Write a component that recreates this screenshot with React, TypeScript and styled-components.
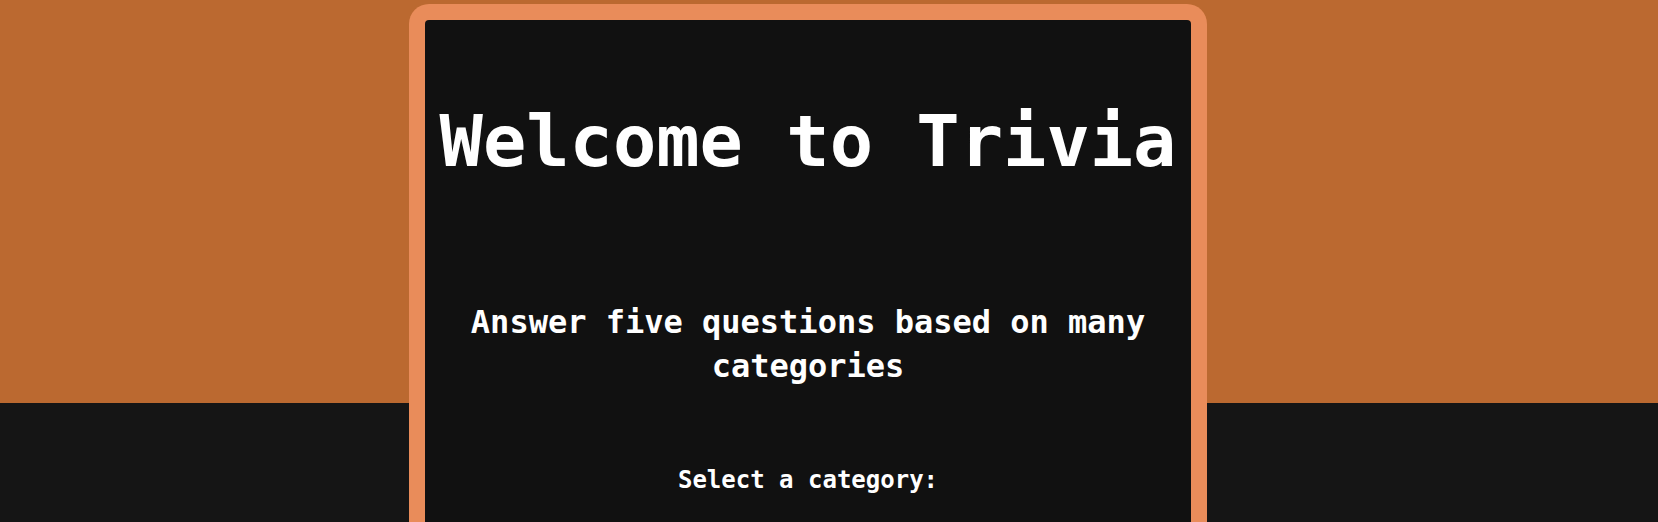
import React from "react";
import styled, { createGlobalStyle } from "styled-components";

const GlobalStyle = createGlobalStyle`
  html {
    scrollbar-width: none;
  }
  html::-webkit-scrollbar {
    display: none;
  }
  body {
    margin: 0;
    font-family: "DejaVu Sans Mono", "Liberation Mono", monospace;
    background: #151515;
  }
`;

const Page = styled.main`
  min-height: 100vh;
  display: flex;
  justify-content: center;
  align-items: flex-start;
  padding: 4px 42px 40px 0;
  box-sizing: border-box;
  background: linear-gradient(to bottom, #bb6930 0, #bb6930 403px, #151515 403px);
`;

const Card = styled.section`
  width: 798px;
  box-sizing: border-box;
  padding: 16px;
  background: #e98c5a;
  border-radius: 20px;
`;

const Panel = styled.div`
  background: #111111;
  border-radius: 4px;
  display: flex;
  flex-direction: column;
  align-items: center;
  padding: 78px 0 60px;
  color: #ffffff;
  text-align: center;
`;

const Title = styled.h1`
  margin: 0;
  font-size: 72px;
  line-height: 86.4px;
  font-weight: 700;
`;

const Subtitle = styled.h2`
  margin: 116px 0 0;
  padding: 0 40px;
  font-size: 32px;
  line-height: 44px;
  font-weight: 700;
`;

const Label = styled.label`
  margin-top: 79px;
  font-size: 24px;
  line-height: 26px;
  font-weight: 700;
`;

const Select = styled.select`
  margin-top: 40px;
  font-family: inherit;
  font-size: 20px;
  padding: 8px 16px;
  border-radius: 6px;
  border: 2px solid #e98c5a;
  background: #1c1c1c;
  color: #ffffff;
`;

const StartButton = styled.button`
  margin-top: 32px;
  font-family: inherit;
  font-size: 22px;
  font-weight: 700;
  padding: 12px 32px;
  border: none;
  border-radius: 8px;
  background: #e98c5a;
  color: #111111;
  cursor: pointer;
`;

const categories = [
  "General Knowledge",
  "Books",
  "Film",
  "Music",
  "Science & Nature",
  "History",
  "Geography",
  "Sports",
];

export default function App() {
  return (
    <>
      <GlobalStyle />
      <Page>
        <Card>
          <Panel>
            <Title>Welcome to Trivia</Title>
            <Subtitle>
              Answer five questions based on many
              <br />
              categories
            </Subtitle>
            <Label htmlFor="category">Select a category:</Label>
            <Select id="category" defaultValue={categories[0]}>
              {categories.map((c) => (
                <option key={c} value={c}>
                  {c}
                </option>
              ))}
            </Select>
            <StartButton type="button">Start</StartButton>
          </Panel>
        </Card>
      </Page>
    </>
  );
}
